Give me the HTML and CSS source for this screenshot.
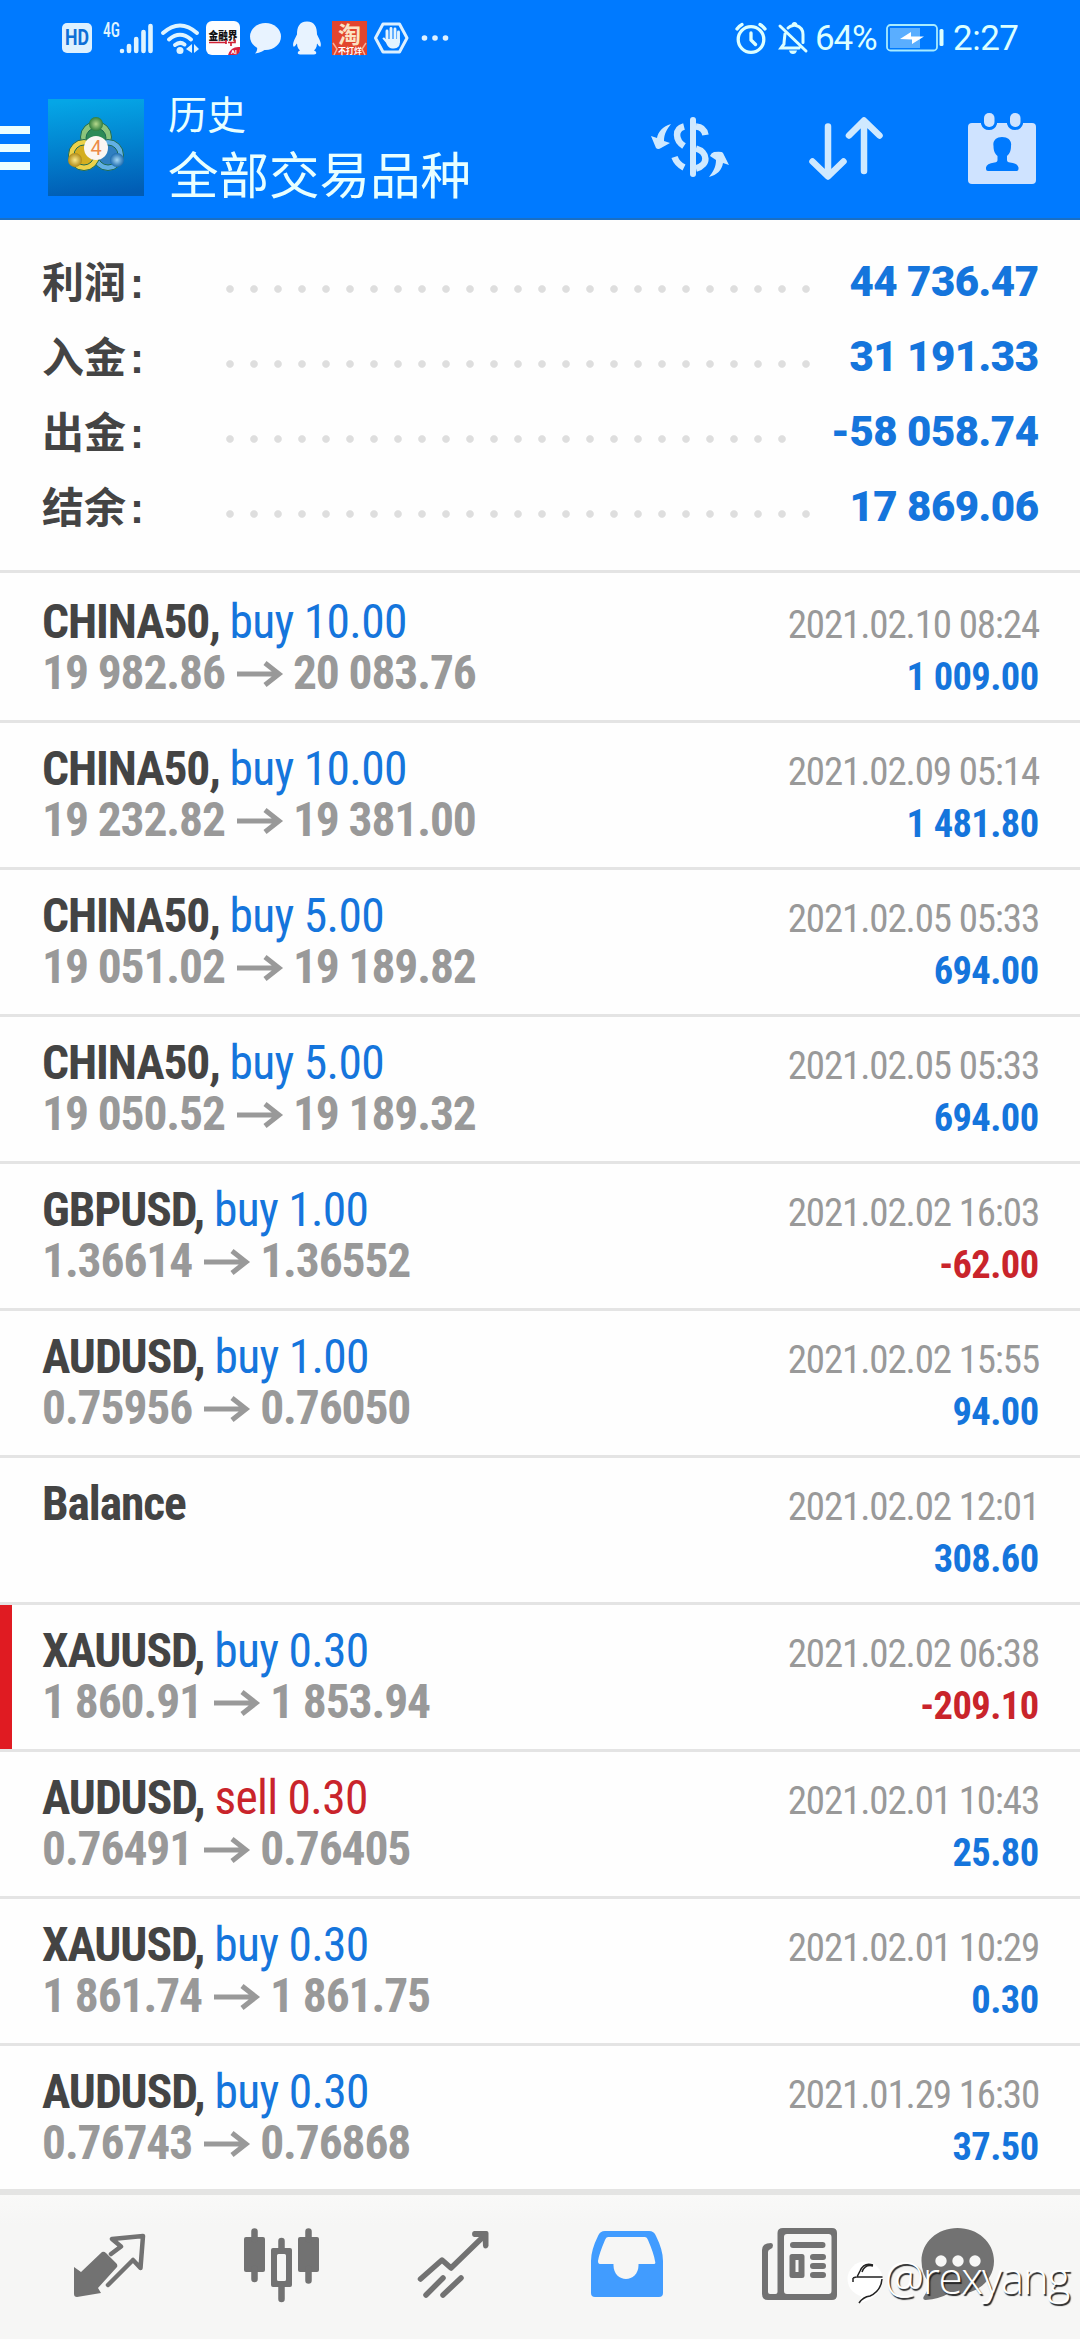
FILE: index.html
```html
<!DOCTYPE html>
<html lang="zh-CN">
<head>
<meta charset="utf-8">
<title>历史</title>
<link rel="stylesheet" href="styles.css">
</head>
<body>
<div class="screen">
  <header class="top">
    <div class="status">
      <svg class="i-hd" width="30" height="32" viewBox="62 22 30 32"><rect x="62" y="23" width="30" height="30" rx="5" fill="#def1ff"/><text x="77" y="45" text-anchor="middle" textLength="24" lengthAdjust="spacingAndGlyphs" class="hd">HD</text></svg>
      <svg class="i-sig" width="50" height="32" viewBox="103 21 50 32"><text x="103" y="36" textLength="17" lengthAdjust="spacingAndGlyphs" class="net">4G</text><g stroke="#dff4ff" stroke-width="4.6" stroke-linecap="round"><path d="M122 50v0M129 45v5M136.200 38v12M143.500 31v19M150.500 25v25"/></g></svg>
      <svg class="i-wifi" width="38" height="34" viewBox="161 20 38 34"><g fill="none" stroke="#dff4ff" stroke-width="4" stroke-linecap="round"><path d="M163 32Q180 17 197 32M169 38.500Q180 29 191 38.500M175 44Q180 40 184.500 43.500"/></g><circle cx="180" cy="49.500" r="3.500" fill="#dff4ff"/><path d="M192 43v9l-6-4zM194 52v-9l5 5z" fill="#dff4ff"/></svg>
      <svg class="i-jrj" width="34" height="34" viewBox="206 21 34 34"><rect x="206" y="21" width="34" height="34" rx="6" fill="#fcfdff"/><text x="208.500" y="40" textLength="29" lengthAdjust="spacingAndGlyphs" class="jrj">金融界</text><path d="M209 42.500h17M228 42.500h7v-3M231 42v4M226 40v4" stroke="#d02034" stroke-width="1.700" fill="none"/><path d="M240 47q-9-1-12 8h6q6 0 6-6z" fill="#d81f3e"/><text x="231" y="54" class="ai">AI</text></svg>
      <svg class="i-chat" width="32" height="32" viewBox="250 22 32 32"><ellipse cx="265.500" cy="36.500" rx="15.500" ry="13.500" fill="#e8f3ff"/><path d="M257 46q1 5-2 7.500 8-1 12-6z" fill="#e8f3ff"/></svg>
      <svg class="i-qq" width="30" height="34" viewBox="292 21 30 34"><path d="M307 21.500c-8 0-10 6-10 13-2 4-5 9-3.500 12 1 1 2.500-2 3.500-3 0 4 2 6 3 7-3 1-3 4 0 4h14c3 0 3-3 0-4 1-1 3-3 3-7 1 1 2.500 4 3.500 3 1.500-3-1.500-8-3.500-12 0-7-2-13-10-13z" fill="#e8f3ff"/></svg>
      <svg class="i-tao" width="35" height="34" viewBox="332 21 35 34"><rect x="332" y="21" width="35" height="34" fill="#e2452e"/><text x="338" y="43" class="tao">淘</text><path d="M333 43l4 6-3 6M366 43l-4 6 3 6" stroke="#f6b09a" stroke-width="1.500" fill="none"/><text x="338" y="53.500" class="tao-s">不打烊</text></svg>
      <svg class="i-hand" width="36" height="34" viewBox="373 21 36 34"><path d="M383 24h16.500l7.500 14-7.500 14H383l-7.500-14z" fill="none" stroke="#dcf0ff" stroke-width="3" stroke-linejoin="round"/><path d="M387 31v10M391 28.500v12M395 29v12M398.500 32v10" stroke="#e4f4ff" stroke-width="2.900" stroke-linecap="round"/><path d="M385.500 39h14.400v3q0 6-6 6.500c-5 0-6-2-8-6l-3.500-4q1.500-2 3.100.5z" fill="#e4f4ff"/></svg>
      <svg class="i-more" width="28" height="10" viewBox="421 34 28 10"><g fill="#def1ff"><circle cx="424.500" cy="39" r="2.800"/><circle cx="435" cy="39" r="2.800"/><circle cx="445.500" cy="39" r="2.800"/></g></svg>
      <svg class="i-alarm" width="34" height="34" viewBox="734 20 34 34"><g fill="none" stroke="#dcffff" stroke-width="3.300" stroke-linecap="round" stroke-linejoin="round"><circle cx="751" cy="38.500" r="12.800"/><path d="M751 32v7l4.500 4.500M737 28q2-3 5-4.500M765 28q-2-3-5-4.500"/></g></svg>
      <svg class="i-bell" width="30" height="34" viewBox="778 20 30 34"><g fill="none" stroke="#dcffff" stroke-width="3" stroke-linecap="round"><path d="M780 25l26 25M785 33q-1 8-1 10l-3 4h18M788 27q2-2 5-2.500 0-2 1.500-2 1.500 0 1.500 2 7 2 7 9v8"/></g><path d="M789 49.500h8q-1 3.500-4 3.500t-4-3.500z" fill="#dcffff"/></svg>
      <span class="pct">64%</span>
      <svg class="i-bat" width="58" height="30" viewBox="886 23 58 30"><rect x="887" y="25" width="50" height="25.500" rx="3.500" fill="none" stroke="#a8ecff" stroke-width="1.800"/><rect x="890" y="28" width="30" height="20" fill="#5aaeff"/><path d="M900 39l11-7v4.500h13L912 44v-4.500z" fill="#fff"/><rect x="939.500" y="29" width="4" height="17" rx="1.500" fill="#dcffff"/></svg>
      <span class="time">2:27</span>
    </div>
    <div class="bar">
      <svg width="30" height="46" viewBox="0 0 30 46"><path d="M0 4h30M0 22h30M0 40h30" stroke="#edffff" stroke-width="8"/></svg>
      <svg class="logo" width="96" height="97" viewBox="48 98 96 97">
        <defs>
          <linearGradient id="bg" x1=".4" y1="0" x2=".5" y2="1"><stop offset="0" stop-color="#05a6e6"/><stop offset=".5" stop-color="#0282cf"/><stop offset="1" stop-color="#015cb4"/></linearGradient>
          <radialGradient id="g"><stop offset="0" stop-color="#b6d98c"/><stop offset="1" stop-color="#2f7d3d"/></radialGradient>
          <radialGradient id="y"><stop offset="0" stop-color="#fbe98a"/><stop offset="1" stop-color="#b08a18"/></radialGradient>
          <radialGradient id="b"><stop offset="0" stop-color="#a5d8f4"/><stop offset="1" stop-color="#1d6cb0"/></radialGradient>
        </defs>
        <rect x="48" y="98" width="96" height="97" fill="url(#bg)"/>
        <g stroke="#1e6a52" stroke-width="1">
          <circle cx="96" cy="136" r="15.500" fill="#8cc47c"/><circle cx="96" cy="137" r="10" fill="#2d8a56"/>
          <circle cx="108" cy="154" r="15.500" fill="#62b0e4"/><circle cx="108" cy="154" r="10" fill="#2f7fc0"/>
          <circle cx="84" cy="154" r="15.500" fill="#ecd24a"/><circle cx="84" cy="154" r="10" fill="#d4ae20"/>
        </g>
        <circle cx="96" cy="123" r="7" fill="url(#g)"/><circle cx="75" cy="159" r="7" fill="url(#y)"/><circle cx="117" cy="159" r="7" fill="url(#b)"/>
        <circle cx="96" cy="147" r="12" fill="#fbf6f2"/>
        <text x="96" y="154" text-anchor="middle" class="four">4</text>
      </svg>
      <div class="titles"><div class="t1">历史</div><div class="t2">全部交易品种</div></div>
      <svg class="act" width="156" height="80" viewBox="612 105 156 80"><g fill="none" stroke="#cfe9ff" stroke-width="6.500"><path d="M693 118v54" stroke-width="6" stroke-linecap="round"/><path d="M684 124.500C674.500 127 675 138 684 144M696 124.500Q704 125 705.500 133" /><path d="M696 146.500C708 150 709 163 696 166.500"/><path d="M674.500 155Q677 162 684 165.500"/></g><path d="M671 122C663 124 658 130 657 136l-6-2 5 12q2 2 5 0l9-5-6-2c0-7 3-12 7-17zM709 175c4-5 7-10 7-17l-6-4q1-3 4-4 8-1 9 1l6 12-6-2c-1 7-6 12-14 14z" fill="#cfe9ff"/></svg>
      <svg width="156" height="80" viewBox="768 105 156 80"><g fill="none" stroke="#cfe9ff" stroke-width="6.500" stroke-linecap="round" stroke-linejoin="round"><path d="M828 124.500V174M812.500 159.500L828 174.500l15.500-15M864 169V119M849 133.500l15-15 15.500 15"/></g></svg>
      <svg width="156" height="80" viewBox="924 105 156 80"><rect x="968" y="121" width="68" height="61" rx="4" fill="#cfe3ff"/><path d="M981 120h16v2q-2 6-8 6t-8-6zM1007 120h16v2q-2 6-8 6t-8-6z" fill="#007aff"/><rect x="984" y="111" width="10.500" height="14" rx="5" fill="#cfe3ff"/><rect x="1010" y="111" width="10.500" height="14" rx="5" fill="#cfe3ff"/><path d="M1002 135c-6 0-9.500 4-8.500 9 0 6 2 8 4 10v4q0 2-3 2.500-8 1-8.500 5v1.500q0 2 2 2h28.500q2 0 2-2v-1.500q-.5-4-8.500-5-3-.5-3-2.500v-4c2-2 4-4 4-10 1-5-2.500-9-9-9z" fill="#007aff"/></svg>
    </div>
  </header>

  <section class="summary">
    <div class="sum"><span class="lab">利润<span class="colon">:</span></span><i class="dots"></i><b>44 736.47</b></div>
    <div class="sum"><span class="lab">入金<span class="colon">:</span></span><i class="dots"></i><b>31 191.33</b></div>
    <div class="sum"><span class="lab">出金<span class="colon">:</span></span><i class="dots"></i><b>-58 058.74</b></div>
    <div class="sum"><span class="lab">结余<span class="colon">:</span></span><i class="dots"></i><b>17 869.06</b></div>
  </section>

  <main class="list">
    <div class="row first"><div><div class="sym">CHINA50, <span class="buy">buy 10.00</span></div><div class="px">19 982.86<svg class="arr" viewBox="0 0 46 26"><path d="M0 13h42M28 2l14 11-14 11"/></svg>20 083.76</div></div><div class="r"><div class="dt">2021.02.10 08:24</div><div class="pl">1 009.00</div></div></div>
    <div class="row"><div><div class="sym">CHINA50, <span class="buy">buy 10.00</span></div><div class="px">19 232.82<svg class="arr" viewBox="0 0 46 26"><path d="M0 13h42M28 2l14 11-14 11"/></svg>19 381.00</div></div><div class="r"><div class="dt">2021.02.09 05:14</div><div class="pl">1 481.80</div></div></div>
    <div class="row"><div><div class="sym">CHINA50, <span class="buy">buy 5.00</span></div><div class="px">19 051.02<svg class="arr" viewBox="0 0 46 26"><path d="M0 13h42M28 2l14 11-14 11"/></svg>19 189.82</div></div><div class="r"><div class="dt">2021.02.05 05:33</div><div class="pl">694.00</div></div></div>
    <div class="row"><div><div class="sym">CHINA50, <span class="buy">buy 5.00</span></div><div class="px">19 050.52<svg class="arr" viewBox="0 0 46 26"><path d="M0 13h42M28 2l14 11-14 11"/></svg>19 189.32</div></div><div class="r"><div class="dt">2021.02.05 05:33</div><div class="pl">694.00</div></div></div>
    <div class="row"><div><div class="sym">GBPUSD, <span class="buy">buy 1.00</span></div><div class="px">1.36614<svg class="arr" viewBox="0 0 46 26"><path d="M0 13h42M28 2l14 11-14 11"/></svg>1.36552</div></div><div class="r"><div class="dt">2021.02.02 16:03</div><div class="pl neg">-62.00</div></div></div>
    <div class="row"><div><div class="sym">AUDUSD, <span class="buy">buy 1.00</span></div><div class="px">0.75956<svg class="arr" viewBox="0 0 46 26"><path d="M0 13h42M28 2l14 11-14 11"/></svg>0.76050</div></div><div class="r"><div class="dt">2021.02.02 15:55</div><div class="pl">94.00</div></div></div>
    <div class="row"><div><div class="sym">Balance</div></div><div class="r"><div class="dt">2021.02.02 12:01</div><div class="pl">308.60</div></div></div>
    <div class="row flag"><div><div class="sym">XAUUSD, <span class="buy">buy 0.30</span></div><div class="px">1 860.91<svg class="arr" viewBox="0 0 46 26"><path d="M0 13h42M28 2l14 11-14 11"/></svg>1 853.94</div></div><div class="r"><div class="dt">2021.02.02 06:38</div><div class="pl neg">-209.10</div></div></div>
    <div class="row"><div><div class="sym">AUDUSD, <span class="sell">sell 0.30</span></div><div class="px">0.76491<svg class="arr" viewBox="0 0 46 26"><path d="M0 13h42M28 2l14 11-14 11"/></svg>0.76405</div></div><div class="r"><div class="dt">2021.02.01 10:43</div><div class="pl">25.80</div></div></div>
    <div class="row"><div><div class="sym">XAUUSD, <span class="buy">buy 0.30</span></div><div class="px">1 861.74<svg class="arr" viewBox="0 0 46 26"><path d="M0 13h42M28 2l14 11-14 11"/></svg>1 861.75</div></div><div class="r"><div class="dt">2021.02.01 10:29</div><div class="pl">0.30</div></div></div>
    <div class="row last"><div><div class="sym">AUDUSD, <span class="buy">buy 0.30</span></div><div class="px">0.76743<svg class="arr" viewBox="0 0 46 26"><path d="M0 13h42M28 2l14 11-14 11"/></svg>0.76868</div></div><div class="r"><div class="dt">2021.01.29 16:30</div><div class="pl">37.50</div></div></div>
  </main>

  <nav class="nav">
    <svg viewBox="24 16 172 144"><path d="M74 88l7 5 21-20q2-1 4 1l10 10q2 2 1 4L98 109l3 5-24 4q-3 0-3-3z" fill="#727272"/><path d="M111 75l10-7.500-9-7.500 31-3-2.500 32-7.500-8-25 25" fill="none" stroke="#727272" stroke-width="4.500" stroke-linecap="round" stroke-linejoin="round"/></svg>
    <svg viewBox="196 16 172 144"><g fill="#727272"><rect x="244" y="58" width="21" height="35" rx="2"/><rect x="298" y="58" width="21" height="35" rx="2"/><path fill-rule="evenodd" d="M273 69h17q2 0 2 2v35q0 2-2 2h-17q-2 0-2-2V71q0-2 2-2zm5.500 6q-1.500 0-1.500 1.500v24q0 1.500 1.500 1.500h6q1.500 0 1.500-1.500v-24q0-1.500-1.500-1.500z"/></g><path d="M254.500 52.500V60M254.500 90v10M308.500 52.500V60M308.500 90v11.500M281.500 62v7M281.500 107v13" stroke="#727272" stroke-width="6.500" stroke-linecap="round"/></svg>
    <svg viewBox="368 16 172 144"><g fill="none" stroke="#727272" stroke-width="5.500" stroke-linecap="round" stroke-linejoin="round"><path d="M420.500 100L442 81l9 8L485 56M443 99l-17 17M461 99l-18 17"/></g><path d="M474 52h12.500q2 0 2 2v13q-1 2.500-3 2.500t-2.500-2.500l-.5-9h-8.500q-2-.5-2-3t2-3z" fill="#727272"/></svg>
    <svg viewBox="540 16 172 144"><path fill-rule="evenodd" d="M605 52h44q5 0 7 5 7 14 7 25v32q0 4-4 4h-64q-4 0-4-4V82q0-11 7-25 2-5 7-5zm3 6q-2 0-3 3-6 14-7 21 0 3 2 3h13.500c-1 20 26 20 25 0H654q2 0 1-3-1-7-7-21-1-3-3-3z" fill="#419cff"/></svg>
    <svg viewBox="712 16 172 144"><path fill-rule="evenodd" d="M783 49h49q5 0 5 5v62q0 5-5 5h-64q-6 0-6-6V71q0-7 9-7 2 0 2 2.500t-2.500 3.500q-2.500 1-2.500 3v40q0 2 2 2h5.500q2 0 2-2V54q0-5 5.500-5zm4 6q-3 0-3 3v54q0 3 3 3h41.500q3 0 3-3V58q0-3-3-3zM792 75h10q2.500 0 2.500 2.500v19q0 2.500-2.500 2.500h-10q-2.500 0-2.500-2.500v-19q0-2.500 2.500-2.500zm3.500 6v12h3V81z" fill="#727272"/><path d="M793 66h29.500M813 78h10M813 87h10M813 96h10" stroke="#727272" stroke-width="6" stroke-linecap="round"/></svg>
    <svg viewBox="884 16 172 144"><path d="M957.500 49c20 0 36.500 14 36.500 33s-16.500 33-36.500 33q-4 0-8-1-10 6-24 7-3 0-2-3 5-7 6-14-8-9-8-22c0-19 16-33 36-33z" fill="#727272"/><g fill="#f7f7f6"><circle cx="941" cy="82" r="5.700"/><circle cx="958" cy="82" r="5.700"/><circle cx="975" cy="82" r="5.700"/></g></svg>
  </nav>

  <div class="mark">
    <svg width="38" height="44" viewBox="846 2261 38 44"><circle cx="865" cy="2279" r="17.500" fill="#fff"/><path d="M862 2294l-3 9q20-4 23-20z" fill="#fff"/><path d="M873 2265q-9-3-13 6l-3 6h25.500M873 2266q-8-2-11 6M853 2278l3-1M853 2282v-4M882 2279q-1 12-12 17-7 1-11 7" fill="none" stroke="#222" stroke-width="1.500"/></svg>
    <span>@rexyang</span>
  </div>
</div>
</body>
</html>
```
FILE: styles.css
```css
* { box-sizing: border-box; }
body { margin: 0; }
.screen {
  position: relative;
  width: 1080px;
  height: 2340px;
  display: flex;
  flex-direction: column;
  overflow: hidden;
  background: #fefefe;
  font-family: Roboto, "Noto Sans CJK SC", sans-serif;
}
svg { display: block; flex: none; overflow: visible; }

.top {
  height: 220px;
  background: #007aff;
  border-bottom: 2px solid #1a6fc4;
  display: flex;
  flex-direction: column;
}
.status {
  height: 76px;
  padding-left: 62px;
  display: flex;
  align-items: center;
  color: #dcffff;
}
.i-sig { margin-left: 11px; }
.i-wifi { margin-left: 8px; }
.i-jrj { margin-left: 7px; }
.i-chat { margin-left: 10px; }
.i-qq { margin-left: 10px; }
.i-tao { margin-left: 10px; }
.i-hand { margin-left: 6px; }
.i-more { margin-left: 12px; }
.i-alarm { margin-left: 285px; }
.i-bell { margin-left: 10px; }
.hd { font: bold 22px Roboto, sans-serif; fill: #0f6fd6; }
.net { font: 500 20px "Roboto Condensed", Roboto, sans-serif; fill: #dff4ff; }
.jrj { font: 900 11px "Noto Sans CJK SC", sans-serif; fill: #111; }
.ai { font: bold 6px Roboto, sans-serif; fill: #fff; }
.tao { font: bold 23px "Noto Sans CJK SC", sans-serif; fill: #fbe3c4; }
.tao-s { font: bold 8px "Noto Sans CJK SC", sans-serif; fill: #fff; }
.four { font: 20px Roboto, sans-serif; fill: #ec8a48; }
.pct { width: 71px; margin-left: 7px; font-size: 35px; letter-spacing: -1.2px; }
.time { margin-left: 9px; font-size: 35px; letter-spacing: -.5px; }

.bar { flex: 1; display: flex; align-items: center; }
.bar > svg:first-child { margin-top: 4px; }
.logo { margin-left: 18px; }
.titles { margin-left: 24px; padding-top: 3px; color: #e8ffff; white-space: nowrap; }
.t1 { font-size: 39px; line-height: 56px; }
.t2 { font-size: 50.500px; line-height: 65px; }
.act { margin-left: auto; }

.summary { height: 353px; padding-top: 24px; border-bottom: 3px solid #e4e4e4; }
.sum {
  height: 75px;
  padding: 0 42px;
  display: flex;
  align-items: center;
  font-size: 42px;
  font-weight: bold;
  color: #444;
}
.lab { width: 175.500px; margin-top: -4px; }
.colon { margin-left: 4px; font-family: "Liberation Sans", sans-serif; }
.sum b { color: #1575dc; letter-spacing: -.5px; margin-right: -.5px; }
.dots {
  flex: 1;
  height: 10px;
  margin: 15px 30px 0 0;
  background: radial-gradient(circle at 12px 5px, #dedede 3.300px, transparent 4.300px) 0 0 / 24px 10px repeat-x;
}

.row {
  height: 147px;
  padding: 18px 42px 0 42px;
  display: flex;
  justify-content: space-between;
  border-bottom: 3px solid #e4e4e4;
  font-family: "Roboto Condensed", Roboto, sans-serif;
  white-space: nowrap;
}
.row.first { height: 150px; padding-top: 21px; }
.row.last { height: 143px; border: 0; }
.row.flag { box-shadow: inset 12px 0 #e01b22; }
.sym { font-size: 47.500px; font-weight: bold; letter-spacing: -1.100px; line-height: 56px; color: #444; }
.sym span { font-weight: 400; letter-spacing: -.7px; }
.buy { color: #1575dc; }
.sell { color: #c9242b; }
.px {
  display: flex;
  align-items: center;
  font-size: 47.500px;
  font-weight: bold;
  letter-spacing: -1.100px;
  line-height: 46px;
  color: #999;
}
.arr { width: 46px; height: 26px; margin: 1px 10px 0 12px; fill: none; stroke: #999; stroke-width: 5px; }
.r { text-align: right; }
.dt { font-size: 39px; letter-spacing: -1.150px; margin-right: -1px; line-height: 62px; color: #999; }
.pl { font-size: 38.500px; font-weight: bold; letter-spacing: -.6px; margin-right: -.5px; line-height: 41px; color: #1575dc; }
.neg { color: #c9242b; }

.nav {
  height: 150px;
  padding-left: 24px;
  display: flex;
  border-top: 6px solid #e4e4e3;
  background: linear-gradient(#f9f9f8, #f6f6f5 30px);
}
.nav svg { width: 172px; height: 144px; }

.mark {
  position: absolute;
  left: 846px;
  top: 2261px;
  display: flex;
  color: #fff;
}
.mark span {
  margin: -6px 0 0 1px;
  font: 300 44px/44px "Open Sans", "Noto Sans", sans-serif;
  letter-spacing: -1.300px;
  text-shadow: 1.500px 1.500px 1px #222;
}
```
